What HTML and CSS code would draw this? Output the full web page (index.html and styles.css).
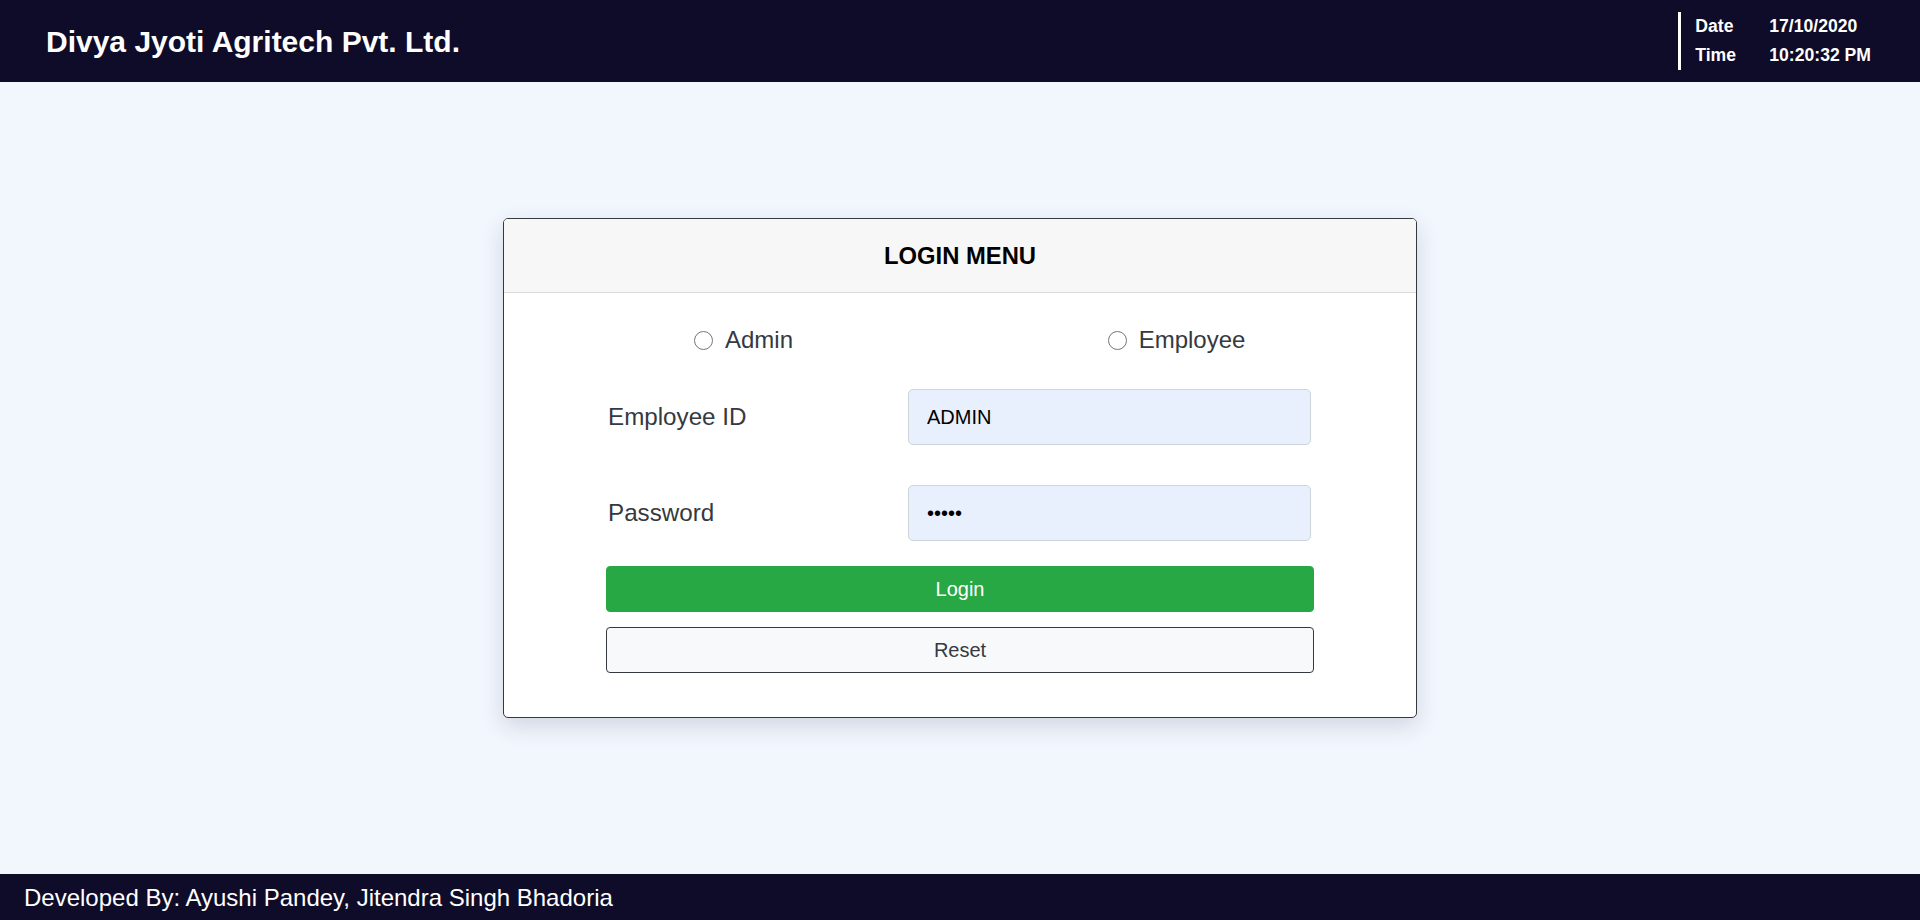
FILE: index.html
```html
<!DOCTYPE html>
<html lang="en">
<head>
<meta charset="utf-8">
<title>Login - Divya Jyoti Agritech Pvt. Ltd.</title>
<link rel="stylesheet" href="styles.css">
</head>
<body>
<div class="page">
  <header class="topbar">
    <h1 class="brand">Divya Jyoti Agritech Pvt. Ltd.</h1>
    <div class="clock">
      <span class="clock-key">Date</span><span class="clock-val">17/10/2020</span>
      <span class="clock-key">Time</span><span class="clock-val">10:20:32 PM</span>
    </div>
  </header>

  <main class="main">
    <section class="card">
      <div class="card-header">LOGIN MENU</div>
      <form class="card-body">
        <div class="role-row">
          <label class="role"><input type="radio" name="role" class="radio"><span>Admin</span></label>
          <label class="role"><input type="radio" name="role" class="radio"><span>Employee</span></label>
        </div>
        <div class="field field-first">
          <label class="field-label" for="eid">Employee ID</label>
          <input class="field-input" id="eid" type="text" value="ADMIN">
        </div>
        <div class="field field-second">
          <label class="field-label" for="pwd">Password</label>
          <input class="field-input" id="pwd" type="password" value="12345">
        </div>
        <button type="button" class="btn btn-login">Login</button>
        <button type="reset" class="btn btn-reset">Reset</button>
      </form>
    </section>
  </main>

  <footer class="footer">Developed By: Ayushi Pandey, Jitendra Singh Bhadoria</footer>
</div>
</body>
</html>
```

FILE: styles.css
```css
* { box-sizing: border-box; }

html, body {
  margin: 0;
  padding: 0;
  height: 100%;
}

body {
  font-family: "Liberation Sans", Arial, sans-serif;
  background: #f2f6fd;
  color: #343a40;
}

.page {
  display: flex;
  flex-direction: column;
  height: 920px;
}

.topbar {
  height: 82px;
  flex: 0 0 82px;
  background: #0f0c29;
  display: flex;
  align-items: center;
  padding-left: 46px;
  padding-right: 49px;
}

.brand {
  margin: 0;
  font-size: 30px;
  font-weight: 700;
  color: #ffffff;
  line-height: 1;
  padding-top: 1px;
}

.clock {
  margin-left: auto;
  border-left: 3px solid #ffffff;
  padding-left: 14px;
  display: grid;
  grid-template-columns: 74px auto;
  font-size: 17.6px;
  font-weight: 700;
  line-height: 29px;
  color: #ffffff;
}

.main {
  flex: 1 1 auto;
  display: flex;
  flex-direction: column;
  align-items: center;
  padding-top: 136px;
}

.card {
  width: 914px;
  height: 500px;
  background: #ffffff;
  border: 1px solid #343a40;
  border-radius: 5px;
  box-shadow: 0 8px 22px rgba(40, 50, 90, 0.16);
  overflow: hidden;
}

.card-header {
  height: 74px;
  background: #f7f7f7;
  border-bottom: 1px solid #d9d9d9;
  display: flex;
  align-items: center;
  justify-content: center;
  font-size: 23.8px;
  font-weight: 700;
  color: #000000;
  padding-top: 1px;
}

.card-body {
  display: flex;
  flex-direction: column;
  align-items: center;
  padding: 0 23px;
}

.role-row {
  width: 100%;
  display: grid;
  grid-template-columns: 1fr 1fr;
  height: 28px;
  margin-top: 33px;
}

.role {
  display: flex;
  align-items: center;
  justify-content: center;
  gap: 12px;
  font-size: 24px;
  color: #343a40;
}

.radio {
  appearance: none;
  -webkit-appearance: none;
  margin: 0;
  width: 19px;
  height: 19px;
  border: 1px solid #767676;
  border-radius: 50%;
  background: #ffffff;
  flex: 0 0 19px;
}

.field {
  width: 708px;
  display: grid;
  grid-template-columns: 300px 403px;
  align-items: center;
  padding-left: 2px;
}

.field-first { margin-top: 35px; }
.field-second { margin-top: 40px; }

.field-label {
  font-size: 24.2px;
  color: #343a40;
}

.field-input {
  height: 56px;
  width: 403px;
  background: #e8f0fe;
  border: 1px solid #ced4da;
  border-radius: 5px;
  padding: 0 18px;
  font-family: "Liberation Sans", Arial, sans-serif;
  font-size: 20px;
  color: #000000;
  outline: none;
}

.btn {
  width: 708px;
  height: 46px;
  border-radius: 4px;
  font-family: "Liberation Sans", Arial, sans-serif;
  font-size: 20px;
  cursor: pointer;
}

.btn-login {
  margin-top: 25px;
  background: #28a745;
  border: 1px solid #28a745;
  color: #ffffff;
}

.btn-reset {
  margin-top: 15px;
  background: #f8f9fa;
  border: 1px solid #343a40;
  color: #343a40;
}

.footer {
  flex: 0 0 46px;
  height: 46px;
  background: #0f0c29;
  color: #ffffff;
  font-size: 24px;
  display: flex;
  align-items: center;
  padding-left: 24px;
  padding-top: 2px;
}
```
